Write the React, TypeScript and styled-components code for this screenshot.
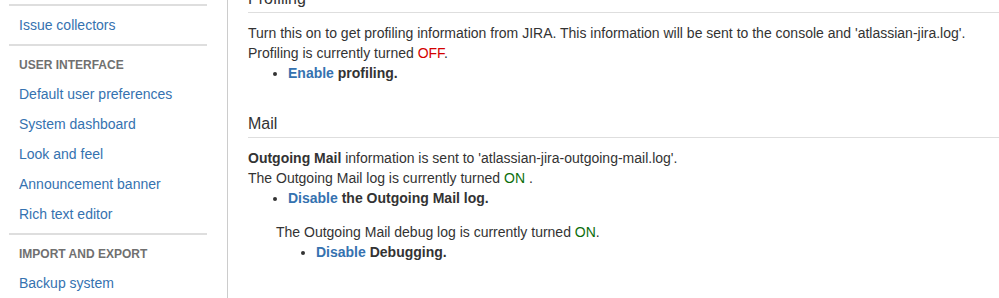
import React from "react";
import styled, { createGlobalStyle } from "styled-components";

const GlobalStyle = createGlobalStyle`
  html, body {
    margin: 0;
    padding: 0;
    background: #fff;
    overflow: hidden;
  }
  body {
    font-family: "Liberation Sans", Arial, sans-serif;
    font-size: 14px;
    color: #333;
  }
`;

const Page = styled.div`
  display: flex;
  width: 999px;
  height: 298px;
  overflow: hidden;
`;

const Sidebar = styled.nav`
  width: 227px;
  flex-shrink: 0;
  border-right: 1px solid #cccccc;
  padding-top: 4px;
  box-sizing: content-box;
`;

const NavGroup = styled.div`
  margin: 0 20px 0 9px;
  border-top: 2px solid #dedede;
  padding: 4px 0;
`;

const NavHeading = styled.div`
  height: 29px;
  line-height: 30px;
  padding-left: 10px;
  font-size: 12px;
  font-weight: bold;
  text-transform: uppercase;
  color: #707070;
`;

const NavLink = styled.a`
  display: block;
  height: 30px;
  line-height: 30px;
  padding-left: 10px;
  font-size: 14px;
  color: #3572b0;
  text-decoration: none;
`;

const Main = styled.main`
  flex: 1;
  padding-left: 20px;
`;

const Section = styled.section<{ $gap?: number }>`
  margin-bottom: ${(p) => p.$gap ?? 0}px;
`;

const SectionTitle = styled.h2<{ $offset?: number }>`
  margin: ${(p) => p.$offset ?? 0}px 0 10px;
  padding-bottom: 3px;
  border-bottom: 1px solid #dedede;
  font-size: 16px;
  line-height: 20px;
  font-weight: normal;
  color: #333;
`;

const Para = styled.div<{ $indent?: number; $top?: number }>`
  line-height: 20px;
  margin-left: ${(p) => p.$indent ?? 0}px;
  margin-top: ${(p) => p.$top ?? 0}px;
`;

const Actions = styled.ul`
  margin: 0;
  padding-left: 40px;
  line-height: 20px;
  font-weight: bold;
`;

const Action = styled.a`
  color: #3572b0;
  text-decoration: none;
`;

const Status = styled.span<{ $on?: boolean }>`
  color: ${(p) => (p.$on ? "#0c6e0c" : "#d40000")};
`;

const navGroups = [
  { heading: null, links: ["Issue collectors"] },
  {
    heading: "User interface",
    links: [
      "Default user preferences",
      "System dashboard",
      "Look and feel",
      "Announcement banner",
      "Rich text editor",
    ],
  },
  { heading: "Import and export", links: ["Backup system"] },
];

const App: React.FC = () => {
  return (
    <>
      <GlobalStyle />
      <Page>
        <Sidebar>
          {navGroups.map((group, i) => (
            <NavGroup key={i}>
              {group.heading && <NavHeading>{group.heading}</NavHeading>}
              {group.links.map((link) => (
                <NavLink key={link} href="#">
                  {link}
                </NavLink>
              ))}
            </NavGroup>
          ))}
        </Sidebar>
        <Main>
          <Section $gap={31}>
            <SectionTitle $offset={-11}>Profiling</SectionTitle>
            <Para>
              Turn this on to get profiling information from JIRA. This information will be sent
              to the console and 'atlassian-jira.log'.
            </Para>
            <Para>
              Profiling is currently turned <Status>OFF</Status>.
            </Para>
            <Actions>
              <li>
                <Action href="#">Enable</Action> profiling.
              </li>
            </Actions>
          </Section>
          <Section>
            <SectionTitle>Mail</SectionTitle>
            <Para>
              <b>Outgoing Mail</b> information is sent to 'atlassian-jira-outgoing-mail.log'.
            </Para>
            <Para>
              The Outgoing Mail log is currently turned <Status $on>ON</Status> .
            </Para>
            <Actions>
              <li>
                <Action href="#">Disable</Action> the Outgoing Mail log.
              </li>
            </Actions>
            <Para $indent={28} $top={14}>
              The Outgoing Mail debug log is currently turned <Status $on>ON</Status>.
            </Para>
            <Para $indent={28}>
              <Actions>
                <li>
                  <Action href="#">Disable</Action> Debugging.
                </li>
              </Actions>
            </Para>
          </Section>
        </Main>
      </Page>
    </>
  );
};

export default App;
